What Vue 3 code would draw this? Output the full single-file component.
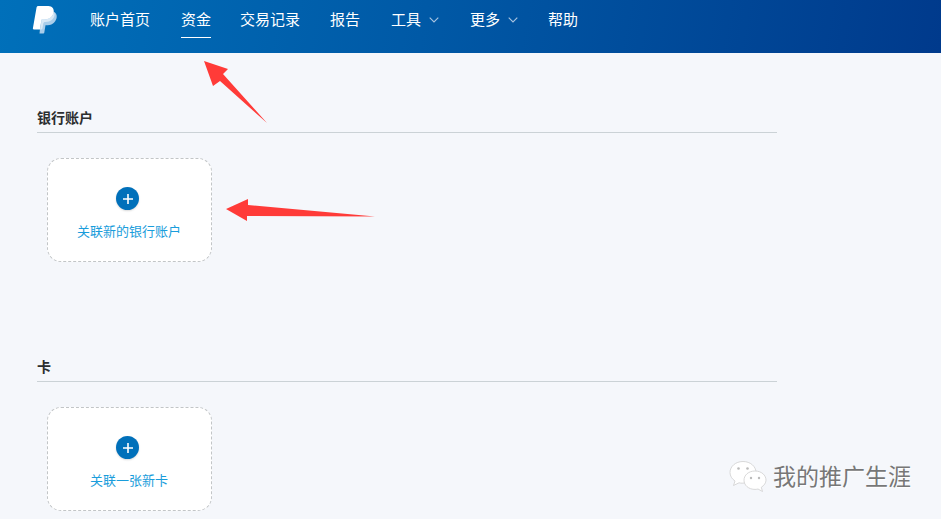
<script setup>
const navItems = [
  { label: '账户首页' },
  { label: '资金', active: true },
  { label: '交易记录' },
  { label: '报告' },
  { label: '工具', menu: true },
  { label: '更多', menu: true },
  { label: '帮助' }
]

const sections = [
  { title: '银行账户', action: '关联新的银行账户' },
  { title: '卡', action: '关联一张新卡' }
]
</script>

<template>
  <div class="page">
    <header class="topbar">
      <svg class="logo" width="26" height="30" viewBox="0 0 26 30">
        <path d="M10 5.500 C15 5 21 5 23.500 8 C26 11 24.500 16 21 18.500 C19 20 16.500 20.300 13.500 20.300 L12.300 27.500 C12.200 28.300 11.800 28.600 11 28.600 L7.500 28.600 Z" fill="#a9cdea" />
        <path d="M6.500 1 L15 1 C19 1 21.500 2.300 21.700 5.500 C22 10.500 18 14.500 12.500 14.500 L9.500 14.500 L8 24.500 L1.800 24.500 C1 24.500 0.800 24 0.900 23.300 L4.500 2.700 C4.700 1.500 5.300 1 6.500 1 Z" fill="#fff" />
        <path d="M9.700 14.500 L12.500 14.500 C18 14.500 21.600 10.800 21.700 6.500 C23.300 8.700 22.800 12.300 20 14.800 C18 16.500 16 17 13.200 17 C12 17 11.500 17.600 11.300 18.500 L10.500 23 C10.300 24 9.900 24.500 8.200 24.500 Z" fill="#d9e9f6" />
      </svg>
      <nav class="nav">
        <a v-for="item in navItems" :key="item.label" class="nav-item" :class="{ active: item.active, menu: item.menu }">
          {{ item.label }}
          <svg v-if="item.menu" class="chevron" width="10" height="6" viewBox="0 0 10 6">
            <path d="M0.700 0.700 L5 5 L9.300 0.700" fill="none" stroke="#a9c4e0" stroke-width="1.100" />
          </svg>
        </a>
      </nav>
    </header>

    <main class="content">
      <section v-for="section in sections" :key="section.title" class="section">
        <h2 class="section-title">{{ section.title }}</h2>
        <div class="add-card">
          <span class="plus">
            <svg width="12" height="12" viewBox="0 0 12 12">
              <path d="M6 1 V11 M1 6 H11" stroke="#fff" stroke-width="1.600" />
            </svg>
          </span>
          <span class="add-label">{{ section.action }}</span>
        </div>
      </section>
    </main>

    <!-- 标注箭头 -->
    <svg class="annotations" width="941" height="519" viewBox="0 0 941 519">
      <path d="M204 61 L228 69 L223 74 L267 123 L220 81 L213 86 Z" fill="#ff3b38" />
      <path d="M226 209 L248 199 L248 205 L375 216.500 L247 216 L247 221 Z" fill="#ff3b38" />
    </svg>

    <div class="watermark">
      <svg width="38" height="34" viewBox="0 0 38 34">
        <path d="M14 1.500 C6.500 1.500 1 6.500 1 12.500 C1 16 3 19 6 21 L4.500 25.500 L10 22.800 C11 23 12 23.200 13 23.200 C20 23.200 27 18.500 27 12.500 C27 6.500 21.500 1.500 14 1.500 Z" fill="#fff" stroke="#cfcfcf" stroke-width="0.800" />
        <path d="M26 11 C19.500 11 15 15.200 15 20.200 C15 25.200 19.500 29.400 26 29.400 C27 29.400 28 29.300 29 29 L33.500 31.500 L32.300 27.300 C35 25.500 37 23 37 20.200 C37 15.200 32.500 11 26 11 Z" fill="#fff" stroke="#cfcfcf" stroke-width="0.800" />
        <circle cx="9.500" cy="8.500" r="1.300" fill="#bbb" />
        <circle cx="18.500" cy="8.500" r="1.300" fill="#bbb" />
        <circle cx="22" cy="18" r="1.200" fill="#bbb" />
        <circle cx="30" cy="18" r="1.200" fill="#bbb" />
      </svg>
      <span class="watermark-text">我的推广生涯</span>
    </div>
  </div>
</template>

<style>
html, body { margin: 0; background: #f5f7fa; }
</style>

<style scoped>
.page {
  position: relative;
  width: 941px;
  height: 519px;
  overflow: hidden;
  background: #f5f7fb;
  font-family: "Liberation Sans", "Noto Sans CJK SC", sans-serif;
}

.topbar {
  display: flex;
  align-items: flex-start;
  height: 53px;
  padding-left: 32px;
  box-sizing: border-box;
  background: linear-gradient(100deg, #0070ba 0%, #0059a6 45%, #003a8c 100%);
}
.logo { margin-top: 5px; flex: none; }

.nav { display: flex; margin-left: 32px; gap: 30px; }
.nav-item {
  display: flex;
  align-items: center;
  gap: 8px;
  height: 38px;
  box-sizing: border-box;
  color: #fff;
  font-size: 15px;
  border-bottom: 1px solid transparent;
}
.nav-item.active { border-bottom-color: #fff; margin: 0 -1px 0 1px; }
.nav-item.menu { margin-left: 1px; }
.chevron { margin-top: 2px; }

.content { padding: 0 0 0 37px; width: 740px; }
.section { height: 249px; padding-top: 55px; box-sizing: border-box; }
.section-title {
  margin: 0 0 25px;
  height: 24px;
  line-height: 20px;
  font-size: 14px;
  font-weight: 700;
  color: #2c2e2f;
  border-bottom: 1px solid #cbd2d6;
}
.add-card {
  display: flex;
  flex-direction: column;
  align-items: center;
  width: 165px;
  height: 104px;
  margin-left: 10px;
  box-sizing: border-box;
  padding-top: 28px;
  background: #fff;
  border: 1px dashed #c2c5c7;
  border-radius: 14px;
}
.plus {
  display: flex;
  align-items: center;
  justify-content: center;
  width: 23px;
  height: 23px;
  margin-right: 4px;
  border-radius: 50%;
  background: #0070ba;
  box-shadow: 0 1px 2px rgba(0, 0, 0, 0.15);
}
.add-label {
  margin-top: 13px;
  margin-right: 1px;
  font-size: 13px;
  line-height: 18px;
  color: #1a9ddb;
}

.annotations { position: absolute; left: 0; top: 0; pointer-events: none; }

.watermark {
  position: absolute;
  left: 729px;
  top: 460px;
  display: flex;
  align-items: center;
  gap: 6px;
}
.watermark-text {
  font-size: 23px;
  line-height: 34px;
  color: #777;
  text-shadow: 1px 1px 1px #fff;
}
</style>
